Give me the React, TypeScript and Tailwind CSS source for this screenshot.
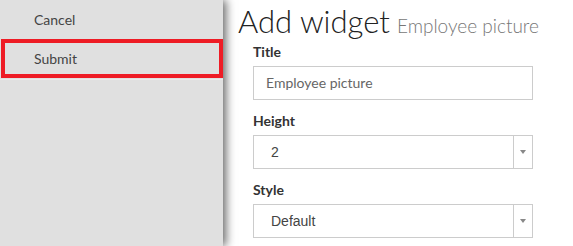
import type { ReactNode } from "react"

function Field({ label, children }: { label: string; children: ReactNode }) {
  return (
    <div className="flex flex-col">
      <label className="text-[14px] font-bold text-[#333] leading-[20px] mb-[4px]">{label}</label>
      {children}
    </div>
  )
}

function SelectBox({ value }: { value: string }) {
  return (
    <div className="flex h-[34px] w-[280px] border border-[#ccc] bg-white">
      <span className="flex-1 pl-[17px] leading-[32px] text-[14px] text-[#444] font-['Liberation_Sans',sans-serif]">{value}</span>
      <span className="w-[19px] border-l border-[#ccc] flex items-center justify-center">
        <span className="block w-0 h-0 border-l-[3px] border-r-[3px] border-t-[4px] border-l-transparent border-r-transparent border-t-[#888]" />
      </span>
    </div>
  )
}

export default function App() {
  return (
    <div className="flex h-[246px] w-[573px] overflow-hidden bg-white font-['Lato',sans-serif]">
      <aside className="relative z-10 w-[223px] shrink-0 bg-[#e0e0e0] shadow-[3px_0_9px_rgba(0,0,0,0.6)]">
        <div className="h-[39px] pl-[34px] flex items-center text-[14px] text-[#444]">Cancel</div>
        <div className="ml-[1px] h-[39px] border-4 border-[#ee1c25] pl-[29px] flex items-center text-[14px] text-[#444]">Submit</div>
        <div className="h-px bg-[#ebebeb] mt-[1px]" />
      </aside>
      <main className="flex-1 pl-[15px]">
        <h1 className="mt-[6px] flex items-baseline gap-[7px] leading-none">
          <span className="text-[31px] font-light text-[#222]">Add widget</span>
          <span className="text-[19px] font-light text-[#777]">Employee picture</span>
        </h1>
        <div className="pl-[15px] mt-[5px] flex flex-col gap-[11px]">
          <Field label="Title">
            <div className="h-[34px] w-[280px] border border-[#ccc] pl-[12px] leading-[32px] text-[14px] text-[#666]">Employee picture</div>
          </Field>
          <Field label="Height">
            <SelectBox value="2" />
          </Field>
          <Field label="Style">
            <SelectBox value="Default" />
          </Field>
        </div>
      </main>
    </div>
  )
}
